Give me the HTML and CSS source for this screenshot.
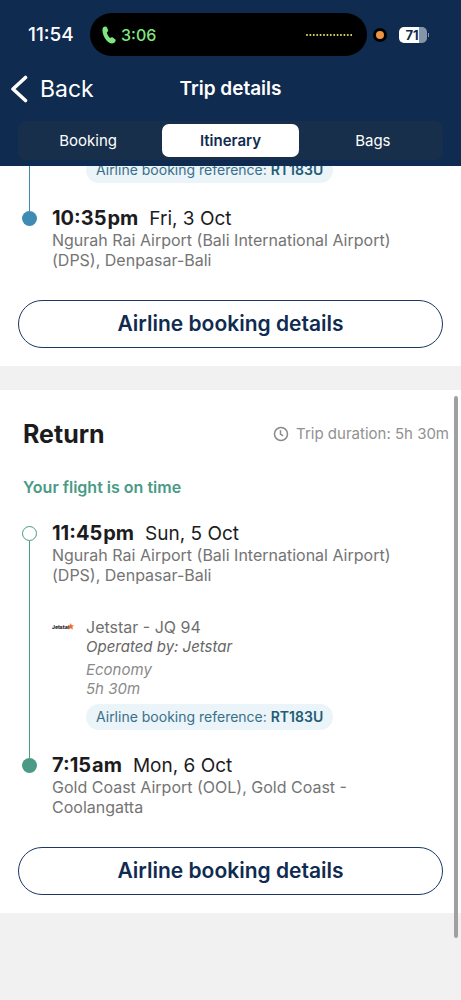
FILE: index.html
```html
<!DOCTYPE html>
<html lang="en">
<head>
<meta charset="utf-8">
<meta name="viewport" content="width=device-width, initial-scale=1">
<title>Trip details</title>
<link rel="stylesheet" href="styles.css">
</head>
<body>
<header class="top">
  <div class="status">
    <span class="clock">11:54</span>
    <div class="island">
      <svg class="phone" viewBox="0 0 14 18" aria-hidden="true"><path d="M1 1.6C2.6.1 4.300.2 5 1.500l1 2.500c.4 1-.2 1.700-1.200 2.400.5 2.200 1.600 4.200 3.300 5.600 1-.8 1.900-1.100 2.700-.5l2.300 1.800c1 .8.600 2.300-.9 3.500-2 1.500-5 .6-7.600-2.200C1.500 11.200-.6 4.800 1 1.600Z"/></svg>
      <span class="call">3:06</span>
      <svg class="wave" viewBox="0 0 46 2" aria-hidden="true"><path d="M1 1H46"/></svg>
    </div>
    <span class="mic"></span>
    <div class="battery"><span class="cell">71</span><span class="cap"></span></div>
  </div>
  <nav class="bar">
    <button class="back" type="button">
      <svg viewBox="0 0 18 28" aria-hidden="true"><path d="M15.500 2.500 3 14 15.500 25.500"/></svg>
      <span>Back</span>
    </button>
    <h1 class="title">Trip details</h1>
  </nav>
  <div class="tabs" role="tablist">
    <button class="tab" type="button" role="tab" aria-selected="false">Booking</button>
    <button class="tab tab-on" type="button" role="tab" aria-selected="true">Itinerary</button>
    <button class="tab" type="button" role="tab" aria-selected="false">Bags</button>
  </div>
</header>
<main class="content">
  <section class="card outbound">
    <ol class="timeline">
      <li class="stop">
        <div class="rail"><span class="line"></span></div>
        <div class="body">
          <div class="flight"><span class="ref">Airline booking reference: <b>RT183U</b></span></div>
        </div>
      </li>
      <li class="stop">
        <div class="rail"><span class="lead lead-line"></span><span class="dot"></span></div>
        <div class="body">
          <p class="when"><b>10:35<span class="ampm">pm</span></b><span>Fri, 3 Oct</span></p>
          <p class="place">Ngurah Rai Airport (Bali International Airport) (DPS), Denpasar-Bali</p>
        </div>
      </li>
    </ol>
    <button class="details" type="button">Airline booking details</button>
  </section>
  <section class="card return">
    <div class="head">
      <h2>Return</h2>
      <span class="duration">
        <svg viewBox="0 0 16 16" aria-hidden="true"><circle cx="8" cy="8" r="6.500"/><path d="M7.500 4.200V8.200L10 9.900"/></svg>
        Trip duration: 5h 30m
      </span>
    </div>
    <p class="ontime">Your flight is on time</p>
    <ol class="timeline">
      <li class="stop">
        <div class="rail"><span class="lead"></span><span class="dot dot-open"></span><span class="line"></span></div>
        <div class="body">
          <p class="when"><b>11:45<span class="ampm">pm</span></b><span>Sun, 5 Oct</span></p>
          <p class="place">Ngurah Rai Airport (Bali International Airport) (DPS), Denpasar-Bali</p>
          <div class="flight leg">
            <svg class="logo" viewBox="0 0 22 8" role="img" aria-label="Jetstar"><text x="0" y="6">Jetstar</text><path d="M18.800 0l.9 2.300 2.300.1-1.700 1.500.7 2.600-2.200-1.300-2.400 1.300.8-2.600-1.700-1.600 2.400-.1z"/></svg>
            <div class="info">
              <p class="carrier">Jetstar - JQ 94</p>
              <p class="operator">Operated by: Jetstar</p>
              <p class="cabin">Economy<br>5h 30m</p>
            </div>
            <span class="ref">Airline booking reference: <b>RT183U</b></span>
          </div>
        </div>
      </li>
      <li class="stop">
        <div class="rail"><span class="lead lead-line"></span><span class="dot"></span></div>
        <div class="body">
          <p class="when"><b>7:15<span class="ampm">am</span></b><span>Mon, 6 Oct</span></p>
          <p class="place">Gold Coast Airport (OOL), Gold Coast - Coolangatta</p>
        </div>
      </li>
    </ol>
    <button class="details" type="button">Airline booking details</button>
  </section>
  <div class="scroll"></div>
</main>
</body>
</html>
```
FILE: styles.css
```css
* { box-sizing: border-box; }
body {
  margin: 0;
  background: #f1f1f1;
  color: #1c1c1e;
  font-family: Inter, "Noto Sans", sans-serif;
  font-size: 16px;
  line-height: 20px;
}
h1, h2, p, ol { margin: 0; padding: 0; }
button { border: 0; background: none; font: inherit; color: inherit; cursor: pointer; }
b { font-weight: 600; }

.top {
  position: sticky;
  top: 0;
  z-index: 2;
  padding: 13px 18px 6px;
  background: #102b50;
  color: #fff;
}
.status { display: flex; align-items: center; padding-left: 10px; padding-right: 14px; }
.clock { width: 62px; font-size: 19px; font-weight: 500; }
.island {
  flex: 1;
  display: flex;
  align-items: center;
  gap: 5px;
  height: 43px;
  padding: 0 15px 0 12px;
  border-radius: 22px;
  background: #000;
}
.phone { width: 14px; height: 18px; fill: #7fe77f; }
.call { flex: 1; color: #7fe77f; font-size: 16px; font-weight: 500; }
.wave { width: 46px; height: 2px; stroke: #dfe06a; stroke-width: 2; stroke-linecap: round; stroke-dasharray: 0 3.400; }
.mic { width: 14px; height: 14px; margin: 0 12px 0 6px; border: 3px solid #000; border-radius: 50%; background: #f09443; }
.battery { display: flex; align-items: center; gap: 1px; }
.cell {
  width: 28px;
  height: 16px;
  padding-right: 2px;
  border-radius: 5px;
  background: linear-gradient(90deg, #fff 20px, #8795a8 20px);
  color: #102b50;
  font-size: 13px;
  font-weight: 700;
  line-height: 16px;
  text-align: center;
}
.cap { width: 1px; height: 4px; background: #8795a8; }

.bar { display: grid; grid-template-columns: 1fr auto 1fr; align-items: center; height: 65px; }
.back { display: flex; align-items: center; gap: 12px; margin-left: -8px; padding: 0; font-size: 23px; line-height: 28px; }
.back svg { width: 18px; height: 28px; fill: none; stroke: #fff; stroke-width: 3.600; stroke-linecap: round; stroke-linejoin: round; }
.title { font-size: 19px; font-weight: 600; line-height: 24px; }

.tabs { display: grid; grid-template-columns: repeat(3, 1fr); gap: 6px; padding: 3px 2px; border-radius: 8px; background: #172f4a; }
.tab { height: 33px; padding: 0; border-radius: 7px; font-size: 15px; }
.tab-on { background: #fff; color: #102b50; font-weight: 600; }

.content { margin-top: -9px; }
.card { padding: 28px 18px 18px; background: #fff; }
.outbound { --accent: #3f8bb3; padding-top: 0; }
.return { --accent: #4a9a85; margin-top: 24px; }

.head { display: flex; justify-content: space-between; align-items: center; margin-right: -6px; padding-left: 5px; }
.head h2 { font-size: 25px; font-weight: 700; line-height: 32px; }
.duration { display: flex; align-items: center; gap: 7px; color: #919191; font-size: 15px; }
.duration svg { width: 16px; height: 16px; fill: none; stroke: #8a8a8a; stroke-width: 1.500; }
.ontime { margin: 27px 0 24px; padding-left: 5px; color: var(--accent); font-weight: 600; }

.timeline { list-style: none; }
.stop { display: grid; grid-template-columns: 15px 1fr; gap: 15px; padding-left: 4px; }
.rail { display: flex; flex-direction: column; align-items: center; }
.lead { width: 1px; height: 5px; }
.lead-line, .line { background: var(--accent); }
.line { flex: 1; width: 1px; }
.dot { width: 15px; height: 15px; border-radius: 50%; background: var(--accent); }
.dot-open { border: 1px solid var(--accent); background: #fff; }

.when { display: flex; align-items: baseline; gap: 11px; height: 24px; font-size: 19px; line-height: 24px; }
.when b { font-size: 20px; font-weight: 700; }
.ampm { margin-left: 1px; }
.place { max-width: 352px; color: #747474; }
.flight { display: grid; grid-template-columns: 22px 1fr; gap: 6px 12px; padding-bottom: 23px; }
.leg { padding-top: 32px; }
.logo { width: 22px; height: 8px; margin-top: 6px; fill: #f26a2a; }
.logo text { fill: #222; font-size: 5px; font-weight: 800; }
.carrier { color: #707070; }
.operator { color: #666; font-size: 15px; font-style: italic; line-height: 19px; }
.cabin { margin-top: 4px; color: #8a8a8a; font-size: 15px; font-style: italic; line-height: 19px; }
.ref {
  grid-column: 2;
  justify-self: start;
  padding: 3px 10px;
  border-radius: 13px;
  background: #eaf4f9;
  color: #397089;
  font-size: 14px;
}
.ref b { color: #245b75; }
.details {
  display: block;
  width: 100%;
  height: 48px;
  margin-top: 30px;
  border: 1px solid #1c3764;
  border-radius: 24px;
  color: #102b50;
  font-size: 21px;
  font-weight: 600;
  line-height: 28px;
}
.scroll { position: absolute; top: 396px; right: 3px; width: 4px; height: 542px; border-radius: 2px; background: #a0a0a0; }
```
